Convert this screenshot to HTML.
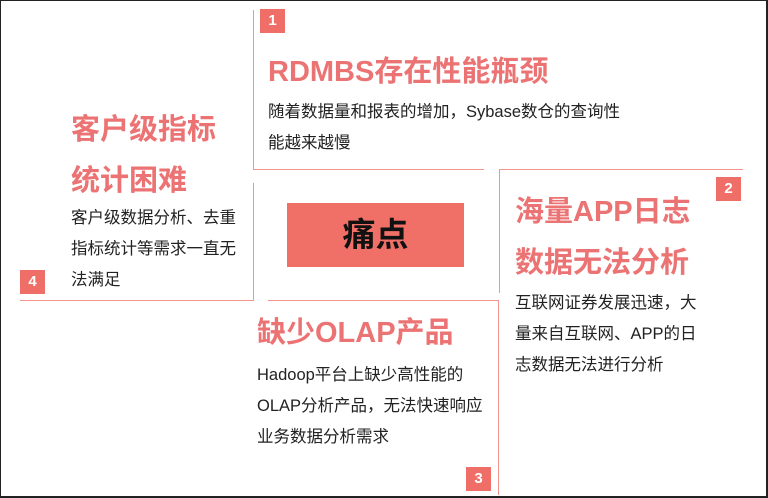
<!DOCTYPE html>
<html><head><meta charset="utf-8"><style>
*{margin:0;padding:0;box-sizing:border-box}
body{width:768px;height:498px;background:#fff;position:relative;overflow:hidden;font-family:"Liberation Sans","Noto Sans CJK SC",sans-serif}
.frame{position:absolute;left:0;top:0;width:768px;height:498px;border:1px solid #222;border-bottom-width:2px;border-right-width:2px}
.l{position:absolute;background:#f3948f}
.n{position:absolute;width:25px;height:24px;background:#ef6f68;color:#fff;font-weight:bold;font-size:15px;text-align:center;line-height:24px}
.t{position:absolute;color:#ec7374;font-weight:bold;font-size:29px;line-height:51px;white-space:nowrap}
.b{position:absolute;color:#222;font-size:16.5px;line-height:31px;white-space:nowrap}
.c{position:absolute;left:287px;top:203px;width:177px;height:64px;background:#f07068;color:#111;font-weight:bold;font-size:33px;text-align:center;line-height:64px}
</style></head><body>
<div class="frame"></div>
<div class="l" style="left:253px;top:10px;width:1px;height:160px"></div>
<div class="l" style="left:253px;top:169px;width:231px;height:1px"></div>
<div class="l" style="left:500px;top:169px;width:243px;height:1px"></div>
<div class="l" style="left:499px;top:169px;width:1px;height:124px"></div>
<div class="l" style="left:253px;top:183px;width:1px;height:118px"></div>
<div class="l" style="left:20px;top:300px;width:234px;height:1px"></div>
<div class="l" style="left:268px;top:300px;width:231px;height:1px"></div>
<div class="l" style="left:498px;top:300px;width:1px;height:195px"></div>
<div class="n" style="left:260px;top:9px">1</div>
<div class="n" style="left:716px;top:177px">2</div>
<div class="n" style="left:466px;top:467px">3</div>
<div class="n" style="left:20px;top:270px">4</div>
<div class="c">痛点</div>
<div class="t" style="left:268px;top:47px">RDMBS存在性能瓶颈</div>
<div class="b" style="left:268px;top:97px">随着数据量和报表的增加，Sybase数仓的查询性<br>能越来越慢</div>
<div class="t" style="left:71px;top:105px">客户级指标<br>统计困难</div>
<div class="b" style="left:71px;top:203px">客户级数据分析、去重<br>指标统计等需求一直无<br>法满足</div>
<div class="t" style="left:515px;top:187px">海量APP日志<br>数据无法分析</div>
<div class="b" style="left:515px;top:288px">互联网证券发展迅速，大<br>量来自互联网、APP的日<br>志数据无法进行分析</div>
<div class="t" style="left:257px;top:308px">缺少OLAP产品</div>
<div class="b" style="left:257px;top:360px">Hadoop平台上缺少高性能的<br>OLAP分析产品，无法快速响应<br>业务数据分析需求</div>
</body></html>
